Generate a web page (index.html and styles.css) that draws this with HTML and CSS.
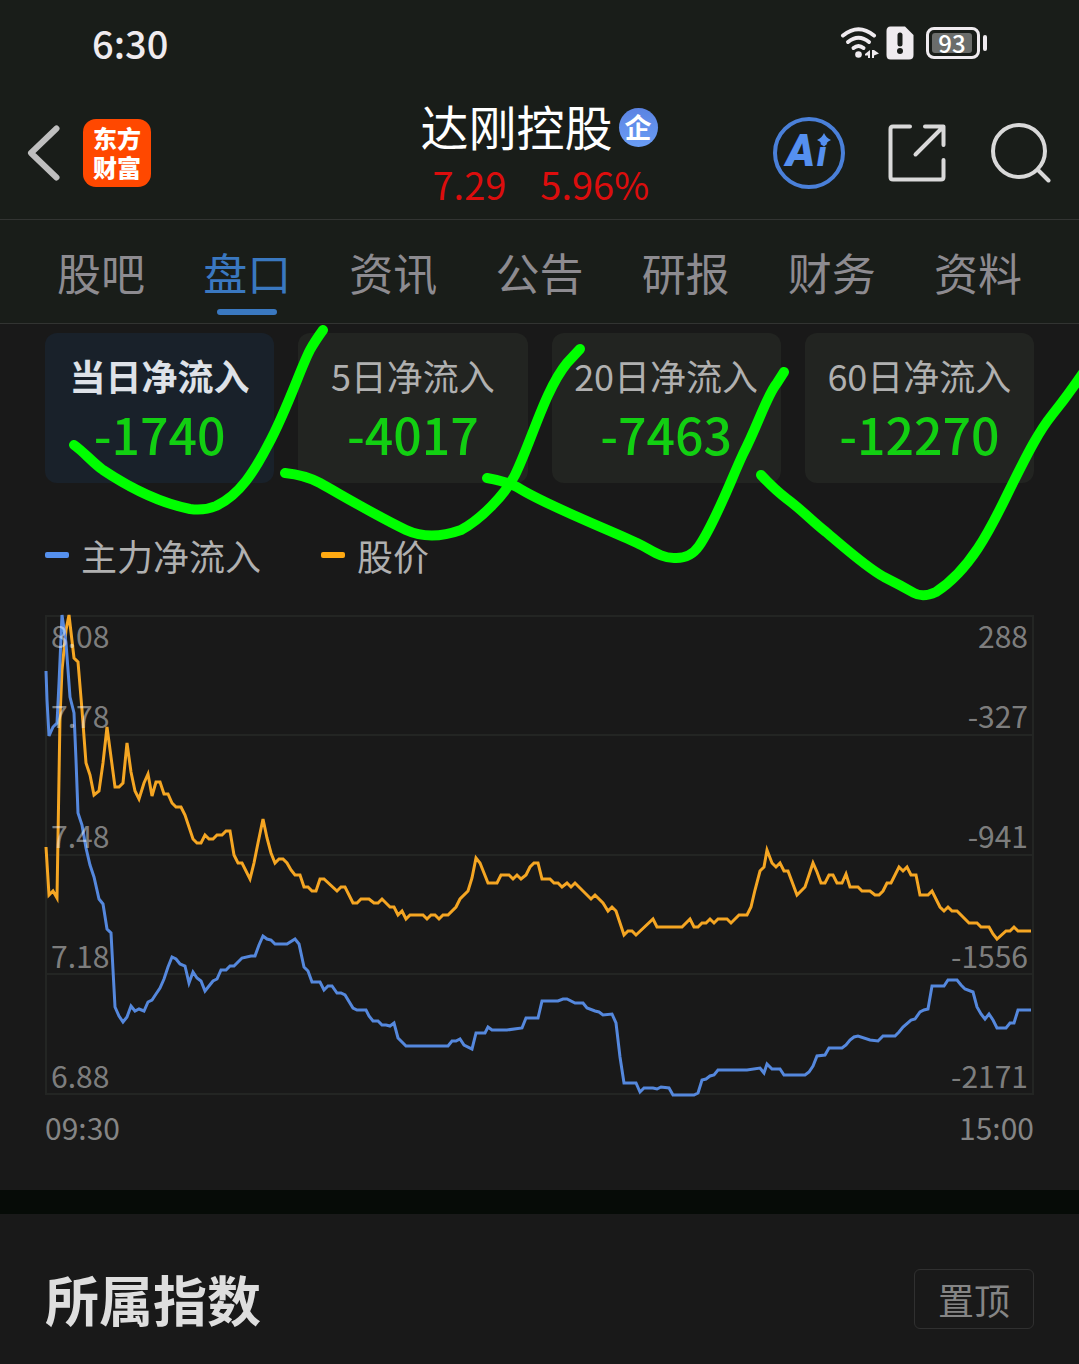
FILE: index.html
```html
<!DOCTYPE html>
<html lang="zh-CN">
<head>
<meta charset="utf-8">
<meta name="viewport" content="width=device-width, initial-scale=1">
<title>达刚控股 盘口</title>
<link rel="stylesheet" href="styles.css">
</head>
<body>
<div class="page">
  <div class="top">
    <div class="status">
      <span class="clock">6:30</span>
      <div class="status-icons">
        <svg class="wifi" width="40" height="34" viewBox="0 0 40 34" aria-hidden="true">
          <g fill="none" stroke="#efebef" stroke-width="4" stroke-linecap="round">
            <path d="M3 9.500Q18.500-3 34 9.500"/>
            <path d="M8 16Q18.500 7.500 29 16"/>
            <path d="M13.500 22Q18.500 18 23.500 22"/>
          </g>
          <circle cx="18.500" cy="28.500" r="3.300" fill="#efebef"/>
          <path d="M30 24v8h-2v-2.500h-3v-1.500zM32 24v8h2v-2.500l5-2-5-3.500z" fill="#efebef"/>
        </svg>
        <svg width="28" height="34" viewBox="0 0 28 34" aria-hidden="true">
          <path d="M4.500 0.500H19L27.500 9V29Q27.500 33.500 23 33.500H4.500Q0.500 33.500 0.500 29V5Q0.500 0.500 4.500 0.500Z" fill="#efebef"/>
          <path d="M14 9V18" stroke="#1a1d1a" stroke-width="5" stroke-linecap="round"/>
          <circle cx="14" cy="25" r="3" fill="#1a1d1a"/>
        </svg>
        <div class="battery"><span class="level">93</span></div>
      </div>
    </div>
    <header class="header">
      <div class="side">
        <button class="icon-btn" aria-label="返回">
          <svg width="34" height="58" viewBox="0 0 34 58"><path d="M29.500 4.500L4 29L29.500 53.500" fill="none" stroke="#bfbfbf" stroke-width="6" stroke-linecap="round" stroke-linejoin="round"/></svg>
        </button>
        <a class="logo" href="#">东方<br>财富</a>
      </div>
      <div class="stock">
        <h1 class="name">达刚控股<span class="badge">企</span></h1>
        <p class="quote"><span>7.29</span><span>5.96%</span></p>
      </div>
      <div class="side actions">
        <button class="icon-btn" aria-label="Ai">
          <svg width="72" height="72" viewBox="0 0 72 72">
            <circle cx="36" cy="36" r="34" fill="none" stroke="#4a80d9" stroke-width="4"/>
            <text class="ai" y="49"><tspan x="13">A</tspan><tspan class="ai-i" x="44">i</tspan></text>
            <path d="M51 16Q53 21 58 23Q53 25 51 30Q49 25 44 23Q49 21 51 16Z" fill="#5590f0"/>
          </svg>
        </button>
        <button class="icon-btn" aria-label="分享">
          <svg width="60" height="60" viewBox="0 0 60 60" fill="none" stroke="#d9d9d9" stroke-width="4" stroke-linecap="round" stroke-linejoin="round">
            <path d="M22 3.500H5Q2.500 3.500 2.500 6V54Q2.500 56.500 5 56.500H53Q55.500 56.500 55.500 54V37"/>
            <path d="M37 3.500H55.500V22M54.500 4.500L27.500 31.500"/>
          </svg>
        </button>
        <button class="icon-btn" aria-label="搜索">
          <svg width="60" height="60" viewBox="0 0 60 60" fill="none" stroke="#d9d9d9" stroke-width="4" stroke-linecap="round">
            <circle cx="28" cy="28" r="26"/><path d="M47 47L57.500 57.500"/>
          </svg>
        </button>
      </div>
    </header>
    <nav class="tabs">
      <a href="#">股吧</a>
      <a href="#" class="active" aria-current="page">盘口</a>
      <a href="#">资讯</a>
      <a href="#">公告</a>
      <a href="#">研报</a>
      <a href="#">财务</a>
      <a href="#">资料</a>
    </nav>
  </div>

  <main>
    <section class="flow">
      <div class="cards">
        <button class="card selected"><span class="period">当日净流入</span><span class="amount">-1740</span></button>
        <button class="card"><span class="period">5日净流入</span><span class="amount">-4017</span></button>
        <button class="card"><span class="period">20日净流入</span><span class="amount">-7463</span></button>
        <button class="card"><span class="period">60日净流入</span><span class="amount">-12270</span></button>
      </div>
      <div class="legend">
        <span class="key flow-key">主力净流入</span>
        <span class="key price-key">股价</span>
      </div>
      <div class="chart">
        <svg class="plot" viewBox="45 615 989 480" preserveAspectRatio="none" aria-hidden="true">
          <path class="grid" d="M46 616H1033V1094H46ZM46 735H1033M46 855H1033M46 974H1033"/>
          <polyline class="line price" points="46,847 49,895 53,891 57,898 60,717 62,670 66,630 69,615 74,658 78,662 82,710 86,763 90,775 94,795 99,791 103,763 107,727 111,757 115,787 119,787 123,783 127,743 131,772 135,791 139,799 144,783 148,774 152,796 156,782 160,782 164,794 168,794 172,803 176,807 181,807 185,815 193,839 197,843 201,843 205,835 209,839 213,839 217,835 222,835 226,831 230,831 234,855 238,863 242,863 250,879 254,863 258,843 263,819 267,838 271,853 275,863 279,859 283,859 287,863 291,870 295,875 300,875 304,887 308,887 312,891 316,891 320,879 324,879 337,891 341,887 345,887 353,903 357,903 361,899 369,899 374,903 378,903 382,899 390,907 394,907 398,915 402,911 406,919 410,915 423,915 427,919 431,915 435,915 439,919 443,915 448,915 456,907 460,899 468,891 472,878 476,858 480,863 484,873 488,883 497,883 501,875 509,875 513,879 517,875 521,879 526,875 530,867 534,863 538,863 542,879 550,879 554,883 558,883 562,887 567,883 571,887 575,883 591,899 595,895 603,903 608,911 612,907 616,911 620,923 624,935 628,931 632,931 636,935 653,919 657,927 682,927 690,919 694,927 698,927 702,923 706,923 710,919 714,923 718,919 727,919 731,923 739,915 747,915 751,907 755,890 760,871 764,867 767,850 772,863 776,867 780,863 784,871 788,871 797,895 805,887 809,875 813,863 817,872 821,883 825,883 829,875 833,875 837,883 842,883 846,874 850,887 858,887 862,891 870,891 875,895 879,895 883,891 887,883 891,883 899,867 903,871 907,867 911,875 916,875 920,895 928,895 932,891 940,907 944,911 948,907 952,911 957,911 969,923 977,923 981,927 989,927 993,934 997,939 1006,931 1010,931 1014,927 1018,931 1031,931"/>
          <polyline class="line inflow" points="46,671 47,700 49,736 53,727 57,723 59,683 62,615 66,643 70,697 74,713 76,760 78,813 82,825 86,848 90,865 94,877 99,899 103,904 107,929 111,933 115,1007 119,1016 123,1022 127,1017 131,1006 135,1011 139,1009 144,1011 148,1002 152,1000 156,994 160,988 164,979 168,967 172,957 176,959 180,964 185,966 189,983 193,972 197,978 201,981 205,991 213,981 217,979 221,970 226,970 230,966 234,966 242,958 251,956 255,956 259,945 263,936 267,939 271,940 275,944 287,944 295,939 299,944 304,967 308,971 312,982 320,982 324,990 328,986 332,986 337,993 341,993 345,995 353,1008 357,1010 366,1010 369,1016 373,1021 378,1021 382,1025 386,1025 390,1026 394,1023 398,1038 406,1046 448,1046 452,1041 456,1041 460,1039 464,1045 472,1049 476,1033 485,1033 488,1027 492,1030 507,1030 522,1028 526,1018 538,1018 542,1001 558,1001 563,999 567,999 575,1003 583,1003 587,1008 595,1011 599,1012 603,1015 612,1014 616,1023 620,1057 624,1083 636,1083 640,1092 644,1088 653,1088 657,1089 661,1087 669,1088 673,1095 694,1095 698,1093 702,1080 706,1079 710,1076 714,1075 718,1070 747,1070 760,1068 764,1073 767,1064 772,1069 780,1069 784,1075 805,1075 809,1072 813,1066 817,1056 825,1055 829,1048 842,1048 846,1045 850,1040 854,1037 858,1036 870,1040 878,1041 883,1036 895,1036 899,1032 903,1027 911,1020 915,1019 920,1012 924,1010 928,1009 932,986 944,986 948,980 957,980 961,985 965,989 973,992 977,1007 981,1014 985,1019 989,1014 993,1020 997,1028 1006,1028 1010,1023 1014,1023 1018,1010 1031,1010"/>
        </svg>
        <div class="scale">
          <span>8.08</span><span>7.78</span><span>7.48</span><span>7.18</span><span>6.88</span>
        </div>
        <div class="scale right">
          <span>288</span><span>-327</span><span>-941</span><span>-1556</span><span>-2171</span>
        </div>
      </div>
      <div class="times"><span>09:30</span><span>15:00</span></div>
    </section>
    <section class="index">
      <h2>所属指数</h2>
      <button class="pin">置顶</button>
    </section>
  </main>

  <svg class="marks" viewBox="0 0 1079 640" preserveAspectRatio="none" aria-hidden="true">
    <path d="M74 445C84 452 93 463 103 470C130 488 160 503 190 509Q204 511 216 506C240 495 255 470 268 445C287 410 301 367 310 350Q315 341 323 330"/>
    <path d="M285 473Q305 475 320 483C345 497 375 515 406 530Q430 541 461 530C480 520 505 495 515 475C532 440 545 390 567 363L580 349"/>
    <path d="M487 478Q505 481 517 487C545 505 605 528 637 543C652 550 660 558 674 558Q690 559 699 546C715 523 730 482 743 454C758 425 767 395 777 383L784 372"/>
    <path d="M761 475Q775 490 787 499C802 510 813 522 826 532C845 548 866 567 884 577Q900 585 914 593Q923 598 936 592C970 570 990 530 1007 495C1030 448 1040 430 1052 415Q1068 395 1085 370"/>
  </svg>
</div>
</body>
</html>
```
FILE: styles.css
```css
* {
  box-sizing: border-box;
}

body {
  margin: 0;
  background: #191919;
  color: #dedede;
  font-family: "Noto Sans CJK SC", "Noto Sans", sans-serif;
}

h1, h2, p {
  margin: 0;
  font-weight: 400;
}

button {
  border: 0;
  padding: 0;
  background: none;
  color: inherit;
  font: inherit;
}

a {
  color: inherit;
  text-decoration: none;
}

svg {
  display: block;
}

.page {
  position: relative;
  min-height: 100vh;
  overflow: hidden;
}

.top {
  background: #191d19;
}

/* status bar */
.status {
  display: flex;
  justify-content: space-between;
  align-items: center;
  height: 86px;
  padding: 0 99px 0 92px;
}

.clock {
  color: #efebef;
  font-size: 38px;
  font-weight: 500;
  line-height: 60px;
}

.status-icons {
  display: flex;
  align-items: center;
  gap: 6px;
}

.battery {
  position: relative;
  width: 54px;
  height: 32px;
  margin-left: 6px;
  padding: 3px;
  border: 3px solid #efebef;
  border-radius: 8px;
}

.battery::after {
  content: "";
  position: absolute;
  top: 5px;
  right: -10px;
  width: 4px;
  height: 16px;
  border-radius: 2px;
  background: #efebef;
}

.level {
  display: block;
  width: 40px;
  border-radius: 3px;
  background: #6b6d6b;
  color: #fff;
  font-size: 24px;
  font-weight: 500;
  line-height: 20px;
  text-align: center;
}

/* stock header */
.header {
  display: grid;
  grid-template-columns: 1fr auto 1fr;
  align-items: center;
  height: 134px;
  padding: 0 28px 0 27px;
  border-bottom: 1px solid #323432;
}

.side {
  display: flex;
  align-items: center;
  gap: 22px;
}

.actions {
  justify-content: flex-end;
  gap: 43px;
}

.logo {
  width: 68px;
  height: 68px;
  padding-top: 4px;
  border-radius: 13px;
  background: #ff4800;
  color: #fff;
  font-size: 24px;
  font-weight: 900;
  line-height: 29px;
  text-align: center;
}

.stock {
  padding-top: 6px;
}

.name {
  display: flex;
  align-items: center;
  gap: 6px;
  color: #fff;
  font-size: 48px;
  line-height: 56px;
}

.badge {
  width: 39px;
  height: 39px;
  margin-top: 6px;
  border-radius: 50%;
  background: linear-gradient(#5b83e2, #6a9df5);
  font-size: 27px;
  font-weight: 700;
  line-height: 37px;
  text-align: center;
}

.quote {
  display: flex;
  gap: 34px;
  padding-left: 12px;
  color: #dc0d0d;
  font-size: 38px;
  line-height: 62px;
}

.ai {
  fill: #5590f0;
  font-family: Roboto, sans-serif;
  font-size: 44px;
  font-style: italic;
  font-weight: 900;
}

.ai-i {
  font-size: 35px;
}

/* tabs */
.tabs {
  display: flex;
  height: 104px;
  padding: 0 28px;
  border-bottom: 1px solid #323432;
  color: #8d8b90;
  font-size: 44px;
  line-height: 104px;
}

.tabs a {
  position: relative;
  flex: 1;
  text-align: center;
}

.tabs .active {
  color: #3a78c0;
}

.tabs .active::after {
  content: "";
  position: absolute;
  left: 50%;
  bottom: 8px;
  width: 60px;
  height: 6px;
  margin-left: -30px;
  border-radius: 3px;
  background: #3a78c0;
}

/* net inflow */
.flow {
  padding: 9px 45px 41px;
  border-bottom: 24px solid #060b07;
}

.cards {
  display: grid;
  grid-template-columns: repeat(4, 1fr);
  gap: 24px;
}

.card {
  display: flex;
  flex-direction: column;
  align-items: center;
  height: 150px;
  padding-top: 12px;
  border-radius: 12px;
  background: #222421;
  color: #b0b0b0;
  white-space: nowrap;
}

.selected {
  background: #19212a;
  color: #dee2e8;
}

.period {
  font-size: 36px;
  line-height: 60px;
}

.selected .period {
  font-weight: 700;
}

.amount {
  color: #12cf12;
  font-size: 50px;
  font-weight: 500;
  line-height: 56px;
}

.legend {
  display: flex;
  gap: 60px;
  padding-top: 42px;
  color: #b0b0b0;
  font-size: 36px;
  line-height: 60px;
}

.key {
  display: flex;
  align-items: center;
  gap: 12px;
}

.key::before {
  content: "";
  width: 24px;
  height: 6px;
  border-radius: 2px;
  background: #5590ee;
}

.price-key::before {
  background: #ffa912;
}

.chart {
  position: relative;
  display: flex;
  justify-content: space-between;
  height: 480px;
  margin-top: 30px;
  padding: 0 6px;
}

.plot {
  position: absolute;
  inset: 0;
  width: 100%;
  height: 100%;
  overflow: visible;
}

.grid {
  fill: none;
  stroke: #232523;
  stroke-width: 2;
}

.line {
  fill: none;
  stroke-width: 3;
  vector-effect: non-scaling-stroke;
}

.price {
  stroke: #f5a623;
}

.inflow {
  stroke: #5588dd;
}

.scale {
  position: relative;
  display: grid;
  grid-template-rows: 38px 80px 120px 120px 120px;
  align-items: end;
  color: rgba(255, 255, 255, 0.46);
  font-size: 30px;
  line-height: 36px;
}

.right {
  text-align: right;
}

.times {
  display: flex;
  justify-content: space-between;
  padding-top: 10px;
  color: #858585;
  font-size: 30px;
  line-height: 44px;
}

/* related indexes */
.index {
  display: flex;
  justify-content: space-between;
  align-items: center;
  padding: 49px 45px 30px;
}

.index h2 {
  font-size: 54px;
  font-weight: 700;
  line-height: 72px;
}

.pin {
  width: 120px;
  height: 60px;
  border: 1px solid #303030;
  border-radius: 6px;
  color: #858585;
  font-size: 36px;
  line-height: 56px;
}

/* hand-drawn ticks over the page */
.marks {
  position: absolute;
  top: 0;
  left: 0;
  width: 100%;
  height: 640px;
  pointer-events: none;
  fill: none;
  stroke: #00ff00;
  stroke-width: 10;
  stroke-linecap: round;
  stroke-linejoin: round;
}
```
